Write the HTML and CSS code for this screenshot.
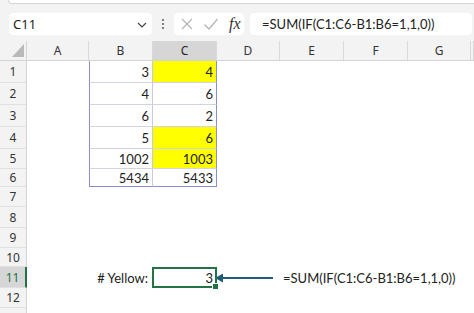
FILE: index.html
```html
<!DOCTYPE html>
<html lang="en">
<head>
  <meta charset="UTF-8">
  <title>Excel - count yellow</title>
  <link rel="stylesheet" href="styles.css">
</head>
<body>
  <div class="ribbon-edge"></div>

  <div class="formula-bar">
    <div class="name-box">
      <span>C11</span>
      <svg class="chevron" width="10" height="6" viewBox="0 0 10 6"><path d="M1 1 L5 5 L9 1" fill="none" stroke="#444" stroke-width="1.2"/></svg>
    </div>
    <div class="dots"><i></i><i></i><i></i></div>
    <div class="fx-buttons">
      <svg width="14" height="14" viewBox="0 0 14 14"><path d="M2 2 L12 12 M12 2 L2 12" stroke="#b4b4b4" stroke-width="1.2"/></svg>
      <svg width="16" height="14" viewBox="0 0 16 14"><path d="M1.5 7.5 L6 12 L14.5 2" fill="none" stroke="#b4b4b4" stroke-width="1.2"/></svg>
      <span class="fx">fx</span>
    </div>
    <div class="formula-input">=SUM(IF(C1:C6-B1:B6=1,1,0))</div>
  </div>

  <div class="sheet">
    <div class="row head">
      <div class="corner"><svg width="12" height="13" viewBox="0 0 12 13"><path d="M12 0 L12 13 L0 13 Z" fill="#b9b9b9"/></svg></div>
      <div class="col">A</div>
      <div class="col">B</div>
      <div class="col active">C</div>
      <div class="col">D</div>
      <div class="col">E</div>
      <div class="col">F</div>
      <div class="col">G</div>
      <div class="col"></div>
    </div>

    <div class="row r22">
      <div class="rh">1</div><div></div>
      <div class="cell t tl">3</div><div class="cell t tr yellow">4</div>
    </div>
    <div class="row r22">
      <div class="rh">2</div><div></div>
      <div class="cell t tl">4</div><div class="cell t tr">6</div>
    </div>
    <div class="row r22">
      <div class="rh">3</div><div></div>
      <div class="cell t tl">6</div><div class="cell t tr">2</div>
    </div>
    <div class="row r22">
      <div class="rh">4</div><div></div>
      <div class="cell t tl">5</div><div class="cell t tr yellow">6</div>
    </div>
    <div class="row r20">
      <div class="rh">5</div><div></div>
      <div class="cell t tl">1002</div><div class="cell t tr yellow">1003</div>
    </div>
    <div class="row r18">
      <div class="rh">6</div><div></div>
      <div class="cell t tl tb">5434</div><div class="cell t tr tb">5433</div>
    </div>
    <div class="row r20"><div class="rh">7</div></div>
    <div class="row r21"><div class="rh">8</div></div>
    <div class="row r20"><div class="rh">9</div></div>
    <div class="row r19"><div class="rh">10</div></div>
    <div class="row r21">
      <div class="rh active">11</div><div></div>
      <div class="cell label"># Yellow:</div>
      <div class="cell selected">3<span class="handle"></span></div>
      <div class="note">
        <svg class="arrow" width="58" height="10" viewBox="0 0 58 10"><path d="M58 5 L6 5" stroke="#1f5c78" stroke-width="2"/><path d="M0 5 L8 0.5 L8 9.5 Z" fill="#1f5c78"/></svg>
        <span>=SUM(IF(C1:C6-B1:B6=1,1,0))</span>
      </div>
    </div>
    <div class="row r20"><div class="rh">12</div></div>
    <div class="row r20"><div class="rh"></div></div>
  </div>
</body>
</html>
```

FILE: styles.css
```css
body {
  margin: 0;
  background: #f3f3f3;
  font-family: 'Noto Sans', sans-serif;
  color: #222;
  overflow: hidden;
}
.ribbon-edge {
  height: 3px;
  margin-left: 8px;
  background: #fff;
  border-bottom: 1px solid #d6d6d6;
  border-left: 1px solid #d6d6d6;
  border-bottom-left-radius: 6px;
}
.formula-bar {
  display: flex;
  align-items: center;
  height: 22px;
  margin-top: 9px;
  padding-left: 9px;
}
.name-box {
  width: 143px;
  height: 22px;
  box-sizing: border-box;
  background: #fff;
  border-radius: 4px;
  display: flex;
  align-items: center;
  justify-content: space-between;
  padding: 0 5px 0 4px;
  font-size: 13px;
}
.chevron {
  margin-top: 1px;
}
.dots {
  width: 22px;
  display: flex;
  flex-direction: column;
  align-items: center;
  gap: 2px;
}
.dots i {
  width: 2px;
  height: 2px;
  background: #555;
  border-radius: 1px;
}
.fx-buttons {
  width: 70px;
  height: 22px;
  box-sizing: border-box;
  background: #fff;
  border-radius: 4px;
  display: flex;
  align-items: center;
  gap: 9px;
  padding-left: 6px;
}
.fx {
  font-family: 'Liberation Serif', serif;
  font-style: italic;
  font-size: 16px;
  color: #333;
  margin-left: 1px;
}
.formula-input {
  flex: 1;
  height: 22px;
  margin: 0 2px 0 6px;
  background: #fff;
  border-radius: 4px;
  display: flex;
  align-items: center;
  padding-left: 12px;
  font-family: Lato, sans-serif;
  font-size: 13px;
  color: #222;
}
.sheet {
  margin-top: 6px;
  background: #fff;
}
.row {
  display: grid;
  grid-template-columns: 27px 62px 64px 64px 63px 64px 64px 63px 1fr;
  font-family: Lato, sans-serif;
  font-size: 13px;
}
.head {
  height: 20px;
  background: #f3f3f3;
  border-bottom: 1px solid #d4d4d4;
  box-sizing: border-box;
}
.corner {
  display: flex;
  align-items: flex-end;
  justify-content: flex-end;
  padding: 0 2px 3px 0;
  border-right: 1px solid #d4d4d4;
}
.col {
  display: flex;
  align-items: center;
  justify-content: center;
  font-family: 'Noto Sans', sans-serif;
  font-size: 12px;
  color: #333;
  border-right: 1px solid #d9d9d9;
}
.col.active {
  background: #d6d6d6;
  color: #222;
}
.r22 { height: 22px; }
.r21 { height: 21px; }
.r20 { height: 20px; }
.r19 { height: 19px; }
.r18 { height: 18px; }
.rh {
  display: flex;
  align-items: center;
  justify-content: center;
  background: #f3f3f3;
  border-right: 1px solid #d4d4d4;
  border-bottom: 1px solid #e0e0e0;
  font-family: 'Noto Sans', sans-serif;
  font-size: 12px;
  color: #333;
}
.rh.active {
  background: #d6d6d6;
  color: #217346;
  border-right: 2px solid #217346;
}
.cell {
  display: flex;
  align-items: center;
  justify-content: flex-end;
  padding-right: 3px;
  color: #222;
}
.t {
  border-bottom: 1px solid #d3d3e6;
}
.tl {
  border-left: 1px solid #8c8ccc;
  border-right: 1px solid #c9c9e2;
}
.tr {
  border-right: 1px solid #8c8ccc;
}
.tb {
  border-bottom-color: #8c8ccc;
}
.yellow {
  background: #ffff00;
}
.label {
  padding-right: 5px;
}
.selected {
  position: relative;
  border: 2px solid #217346;
  margin-left: -1px;
  padding-right: 2px;
}
.handle {
  position: absolute;
  right: -4px;
  bottom: -4px;
  width: 5px;
  height: 5px;
  background: #217346;
  border: 1px solid #fff;
}
.note {
  grid-column: 5 / 10;
  display: flex;
  align-items: center;
  gap: 10px;
  margin-left: -2px;
}
.arrow {
  flex: none;
}
```
